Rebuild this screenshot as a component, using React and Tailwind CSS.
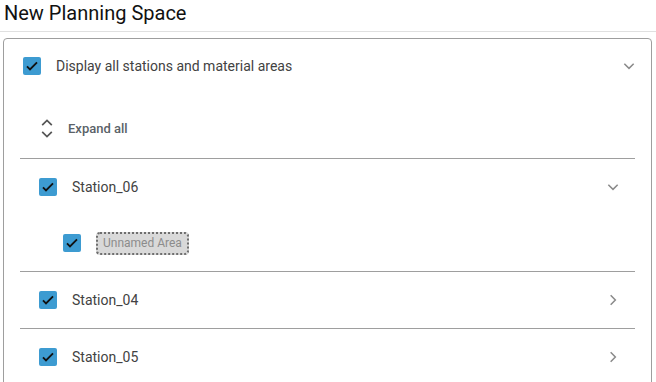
import React from "react";

const Check = ({ className = "" }) => (
  <span className={`flex h-[18px] w-[18px] items-center justify-center rounded-[2px] bg-[#3d9bd1] ${className}`}>
    <svg width="16" height="16" viewBox="0 0 24 24" fill="none">
      <path d="M4.5 12.5l4.5 4.5L19.5 6.5" stroke="#111" strokeWidth="2.8" />
    </svg>
  </span>
);

const ChevronDown = ({ className = "" }) => (
  <svg className={className} width="14" height="14" viewBox="0 0 24 24" fill="none">
    <path d="M4 8l8 8 8-8" stroke="#8a8a8a" strokeWidth="2.6" />
  </svg>
);

const ChevronRight = ({ className = "" }) => (
  <svg className={className} width="14" height="14" viewBox="0 0 24 24" fill="none">
    <path d="M8 4l8 8-8 8" stroke="#8a8a8a" strokeWidth="2.6" />
  </svg>
);

const stations = [
  { name: "Station_06", open: true, areas: ["Unnamed Area"] },
  { name: "Station_04", open: false, areas: [] },
  { name: "Station_05", open: false, areas: [] },
];

export default function App() {
  return (
    <div className="h-[382px] w-[656px] overflow-hidden bg-white font-['Roboto',sans-serif] text-[#424242]">
      <div className="border-b border-[#e0e0e0] pb-[5px] pl-[4px] text-[20px] leading-[26px] text-[#111]">
        New Planning Space
      </div>
      <div className="ml-[3px] mr-[4px] mt-[6px] h-[400px] rounded-t-[4px] border border-[#9e9e9e]">
        <div className="flex h-[53px] items-center pl-[19px] pr-[15px] pt-[1px]">
          <Check />
          <span className="ml-[15px] flex-1 text-[14px]">Display all stations and material areas</span>
          <ChevronDown />
        </div>
        <div className="flex h-[66px] items-center pl-[37px] pt-[7px]">
          <svg width="12" height="19" viewBox="0 0 12 19" fill="none">
            <path d="M1.2 6.2L6 1.5 10.8 6.2M1.2 12.8L6 17.5 10.8 12.8" stroke="#555" strokeWidth="1.7" />
          </svg>
          <span className="ml-[15px] text-[13px] font-medium text-[#5a6268]">Expand all</span>
        </div>
        <div className="mx-4">
          {stations.map((s) => (
            <div key={s.name} className="border-t border-[#9e9e9e]">
              <div className="flex h-[56px] items-center pl-[19px] pr-[15px]">
                <Check />
                <span className="ml-[15px] flex-1 text-[14px]">{s.name}</span>
                {s.open ? <ChevronDown /> : <ChevronRight />}
              </div>
              {s.open &&
                s.areas.map((a) => (
                  <div key={a} className="flex h-[56px] items-center pl-[43px]">
                    <Check />
                    <span className="ml-[15px] rounded-[4px] border-2 border-dotted border-[#6e6e6e] bg-[#d9d9d9] px-[5px] py-[2px] text-[12px] leading-[15px] text-[#8c8c8c]">
                      {a}
                    </span>
                  </div>
                ))}
            </div>
          ))}
        </div>
      </div>
    </div>
  );
}
